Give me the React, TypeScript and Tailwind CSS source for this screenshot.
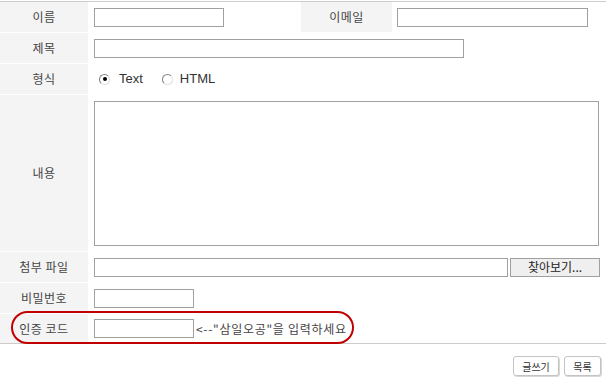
const font = { fontFamily: '"Noto Sans CJK KR", "Liberation Sans", sans-serif' };

function Label({ children, className = "" }: { children: React.ReactNode; className?: string }) {
  return (
    <div className={`flex items-center justify-center bg-[#f4f4f4] text-[12px] tracking-[0.5px] text-[#444] ${className}`}>
      {children}
    </div>
  );
}

function Box({ className = "" }: { className?: string }) {
  return <div className={`h-[19px] border border-[#a0a0a0] bg-white ${className}`} />;
}

function Radio({ checked }: { checked?: boolean }) {
  return (
    <span className="flex h-[11px] w-[11px] items-center justify-center rounded-full border border-t-[#808080] border-l-[#808080] border-r-[#e0e0e0] border-b-[#e0e0e0] bg-white">
      {checked && <span className="h-[4px] w-[4px] rounded-full bg-black" />}
    </span>
  );
}

export default function App() {
  return (
    <div className="relative w-[611px] h-[391px] bg-white pt-px" style={font}>
      <div className="w-[606px] border-t border-b border-[#cccccc] flex flex-col gap-px">
        <div className="flex h-[30px]">
          <Label className="w-[88px]">이름</Label>
          <div className="flex w-[213px] items-center pl-[6px]">
            <Box className="w-[130px]" />
          </div>
          <Label className="w-[91px]">이메일</Label>
          <div className="flex flex-1 items-center pl-[5px]">
            <Box className="w-[191px]" />
          </div>
        </div>
        <div className="flex h-[30px]">
          <Label className="w-[88px]">제목</Label>
          <div className="flex flex-1 items-center pl-[6px]">
            <Box className="w-[370px]" />
          </div>
        </div>
        <div className="flex h-[30px]">
          <Label className="w-[88px]">형식</Label>
          <div className="flex flex-1 items-center pl-[11px] text-[13px] text-[#333]" style={{ fontFamily: '"Liberation Sans", sans-serif' }}>
            <Radio checked />
            <span className="ml-[9px]">Text</span>
            <span className="ml-[19px]"><Radio /></span>
            <span className="ml-[7px]">HTML</span>
          </div>
        </div>
        <div className="flex h-[156px]">
          <Label className="w-[88px]">내용</Label>
          <div className="flex flex-1 items-center pl-[6px]">
            <div className="h-[145px] w-[505px] border border-[#a0a0a0] bg-white" />
          </div>
        </div>
        <div className="flex h-[30px]">
          <Label className="w-[88px]">첨부 파일</Label>
          <div className="flex flex-1 items-center gap-[2px] pl-[6px]">
            <Box className="w-[414px]" />
            <div className="flex h-[19px] w-[90px] items-center justify-center border border-[#a0a0a0] bg-[#efefef] text-[12px] text-[#222]">
              찾아보기...
            </div>
          </div>
        </div>
        <div className="flex h-[30px]">
          <Label className="w-[88px]">비밀번호</Label>
          <div className="flex flex-1 items-center pl-[6px]">
            <Box className="w-[100px]" />
          </div>
        </div>
        <div className="flex h-[29px]">
          <Label className="w-[88px]">인증 코드</Label>
          <div className="flex flex-1 items-center pl-[6px] text-[12px] text-[#444]">
            <Box className="w-[100px]" />
            <span className="ml-[2px] tracking-[0.7px]">&lt;--"삼일오공"을 입력하세요</span>
          </div>
        </div>
      </div>

      <div className="mt-[12px] flex w-[601px] justify-end gap-[5px]">
        <div className="flex h-[20px] w-[46px] items-center justify-center rounded-[3px] border border-[#c4c4c4] bg-white text-[10px] text-[#333] shadow-[1px_1px_0_#d8d8d8]">
          글쓰기
        </div>
        <div className="flex h-[20px] w-[37px] items-center justify-center rounded-[3px] border border-[#c4c4c4] bg-white text-[10px] text-[#333] shadow-[1px_1px_0_#d8d8d8]">
          목록
        </div>
      </div>

      <div className="absolute left-[11px] top-[311px] h-[33px] w-[343px] rounded-full border-[2.5px] border-[#c00000]" />
    </div>
  );
}
